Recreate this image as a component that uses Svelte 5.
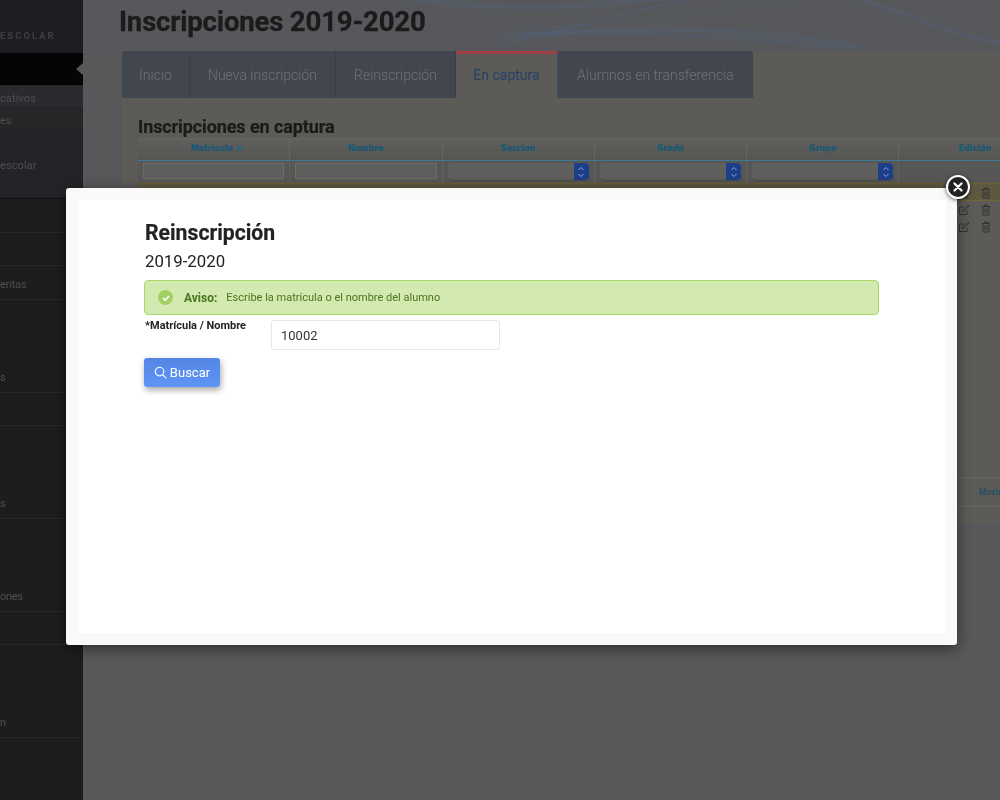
<script>
  const navRows = [
    { cls: 'active', h: 33, text: '' },
    { cls: 'sub', h: 22, text: 'cativos' },
    { cls: 'sub alt', h: 23, text: 'es' },
    { cls: 'group', h: 68, text: 'escolar' },
    { h: 34, text: '' },
    { h: 33, text: '' },
    { cls: 'mid', h: 34, text: 'entas' },
    { h: 93, text: 's', low: true },
    { h: 33, text: '' },
    { h: 93, text: 's', low: true },
    { cls: 'tight', h: 93, text: 'ones', low: true },
    { h: 33, text: '' },
    { h: 93, text: 'n', low: true }
  ];
  const cols = ['Matricula', 'Nombre', 'Seccion', 'Grado', 'Grupo', 'Edición'];
  const rows = [0, 1, 2];
</script>

<div class="page">
  <aside class="sidebar">
    <div class="brand"><span>ESCOLAR</span></div>
    {#each navRows as r}
      <div class="nav {r.cls ?? ''}" class:low={r.low} style="height:{r.h}px">
        {#if r.text}<span>{r.text}</span>{/if}
      </div>
    {/each}
  </aside>

  <main class="main">
    <header class="top">
      <svg class="waves" viewBox="0 0 917 51" preserveAspectRatio="none" aria-hidden="true">
        <g fill="none" stroke="#50627f">
          <path opacity=".55" stroke-width="1.5" d="M417 45C480 30 560 8 620 -4" />
          <path opacity=".3" stroke-width="5" d="M420 36C520 28 650 22 780 48" />
          <path opacity=".3" stroke-width="1.5" d="M440 28C540 26 660 6 730 -4" />
          <path opacity=".25" stroke-width="4" d="M440 34C560 30 680 38 760 48" />
          <path opacity=".5" stroke-width="2.5" d="M770 -2C830 14 880 40 917 42" />
          <path opacity=".3" stroke-width="6" d="M310 -4C400 10 480 12 590 -4" />
        </g>
      </svg>
      <h1>Inscripciones 2019-2020</h1>
    </header>

    <section class="panel">
      <nav class="tabs">
        <div class="tab" style="width:68px">Inicio</div>
        <div class="tab" style="width:146px">Nueva inscripción</div>
        <div class="tab" style="width:120px">Reinscripción</div>
        <div class="tab on" style="width:102px">En captura</div>
        <div class="tab" style="width:195px">Alumnos en transferencia</div>
      </nav>
      <div class="panel-body">
        <h2>Inscripciones en captura</h2>
        <div class="table">
          <div class="thead">
            {#each cols as c, i}
              <div class="th">{c}{#if i === 0}<svg class="sort" viewBox="0 0 10 8"><path d="M5 0l4 4H1z" fill="#1f6a88"/><rect x="1" y="5" width="8" height="2" fill="#4a5a60"/></svg>{/if}</div>
            {/each}
          </div>
          <div class="filters">
            <div class="fcell"><div class="finput"></div></div>
            <div class="fcell"><div class="finput"></div></div>
            {#each [0, 1, 2] as s}
              <div class="fcell"><div class="fselect"><i><svg viewBox="0 0 8 14"><path d="M1.5 5L4 2.5 6.5 5M1.5 9L4 11.5 6.5 9" fill="none" stroke="#8fa6cc" stroke-width="1"/></svg></i></div></div>
            {/each}
            <div class="fcell"></div>
          </div>
          <div class="tbody">
            {#each rows as r}
              <div class="row" class:hi={r === 0}>
                <div class="icons">
                  <svg viewBox="0 0 12 12"><path d="M9 6.5V10.5H1.5V3H6" fill="none" stroke="#333" stroke-width="1"/><path d="M4.5 8L5 6 10 1l1 1-5 5z" fill="none" stroke="#333" stroke-width=".9"/></svg>
                  <svg viewBox="0 0 12 12"><path d="M2 2.5h8M4.5 2.5V1h3v1.5M3 2.5v8.5h6V2.5M5 4.5V9M7 4.5V9" fill="none" stroke="#333" stroke-width="1"/></svg>
                </div>
              </div>
            {/each}
          </div>
          <div class="tfoot"><span>Mostr</span></div>
        </div>
      </div>
    </section>
  </main>

  <div class="modal" role="dialog">
    <button class="close" aria-label="Cerrar">
      <svg viewBox="0 0 10 10"><path d="M1.5 1.5l7 7M8.5 1.5l-7 7" stroke="#fff" stroke-width="2.2" stroke-linecap="round"/></svg>
    </button>
    <div class="modal-inner">
      <h3>Reinscripción</h3>
      <p class="year">2019-2020</p>
      <div class="alert">
        <span class="check"><svg viewBox="0 0 10 10"><path d="M2 5.2l2.2 2L8 3" fill="none" stroke="#fff" stroke-width="1.7"/></svg></span>
        <strong>Aviso:</strong>
        <span class="msg">Escribe la matrícula o el nombre del alumno</span>
      </div>
      <div class="field">
        <label for="q">*Matrícula / Nombre</label>
        <input id="q" value="10002" />
      </div>
      <button class="search">
        <svg viewBox="0 0 14 14"><circle cx="6" cy="6" r="4.6" fill="none" stroke="#fff" stroke-width="1.2"/><path d="M9.4 9.4L13 13" stroke="#fff" stroke-width="1.2" stroke-linecap="round"/></svg>
        Buscar
      </button>
    </div>
  </div>
</div>

<style>
  :global(body) { margin: 0; background: #58585a; font-family: Roboto, "Liberation Sans", sans-serif; }
  .page { position: relative; width: 1000px; height: 800px; display: flex; overflow: hidden; background: #58585a; filter: blur(.35px); }

  .sidebar { width: 83px; flex: none; background: #1d1d20; color: #4e4e50; font-size: 11px; }
  .brand { height: 53px; background: #1e1e22; box-sizing: border-box; padding-top: 30px; overflow: hidden; display: flex; }
  .brand span { font-size: 9.5px; font-weight: 700; letter-spacing: 2px; color: #3f3f42; }
  .nav { box-sizing: border-box; border-bottom: 1px solid #27272a; display: flex; align-items: center; white-space: nowrap; letter-spacing: .1px; position: relative; }
  .nav.low { align-items: flex-end; padding-bottom: 8px; }
  .nav.mid { padding-top: 3px; letter-spacing: -.2px; }
  .nav.tight { letter-spacing: -.3px; }
  .nav.active { background: #050505; border-bottom-color: #232326; }
  .nav.active::after { content: ""; position: absolute; right: 0; top: 10px; border: 6px solid transparent; border-right: 7px solid #58585a; border-left: 0; }
  .nav.sub { background: #2a2b2e; border-bottom-color: #242528; padding-top: 3px; }
  .nav.alt { background: #262629; padding-top: 2px; }
  .nav.group { background: #232427; padding-top: 2px; border-bottom-color: #111; }

  .main { flex: 1; min-width: 0; display: flex; flex-direction: column; }
  .top { height: 51px; flex: none; position: relative; padding-left: 36px; background: #57585b; }
  .waves { position: absolute; inset: 0; width: 100%; height: 100%; }
  h1 { position: relative; margin: 0; font-size: 27.6px; line-height: 44px; font-weight: 700; color: #1b1b1b; letter-spacing: -.2px; -webkit-text-stroke: .3px #1b1b1b; }

  .panel { margin-left: 39px; background: #5c5b58; height: 474px; display: flex; flex-direction: column; }
  .tabs { display: flex; height: 47px; flex: none; }
  .tab { box-sizing: border-box; display: flex; align-items: center; justify-content: center; font-size: 14px; font-weight: 300; color: #6f7277; background: #42474f; border-right: 1px solid #393e47; }
  .tab:first-child { border-top-left-radius: 3px; }
  .tab:last-child { border-top-right-radius: 3px; border-right: 0; }
  .tab.on { background: #5c5b58; color: #234266; border-top: 3px solid #a13f44; border-right: 1px solid #35507a; padding-bottom: 3px; font-weight: 400; }

  .panel-body { padding-left: 16px; }
  h2 { margin: 0; height: 40px; box-sizing: border-box; padding-top: 18px; font-size: 18px; line-height: 22px; font-weight: 700; color: #1a1a1a; letter-spacing: -.1px; white-space: nowrap; -webkit-text-stroke: .2px #1a1a1a; }
  .table { width: 914px; }
  .thead, .filters { display: grid; grid-template-columns: repeat(6, 152.3px); }
  .thead { height: 23px; background: linear-gradient(#605f5c, #555553); border-top: 1px solid #636361; border-bottom: 1px solid #3f7894; box-sizing: border-box; }
  .th { display: flex; align-items: center; justify-content: center; gap: 2px; padding-bottom: 2px; box-sizing: border-box; font-family: "DejaVu Sans", sans-serif; font-size: 8px; font-weight: 700; color: #185a76; -webkit-text-stroke: .2px #185a76; border-right: 1px solid #666664; }
  .th:first-child { padding-left: 8px; }
  .sort { width: 9px; height: 8px; }
  .filters { height: 22px; background: #575755; }
  .fcell { box-sizing: border-box; padding: 1px 5px; border-right: 1px solid #61605d; }
  .finput { height: 14px; margin-top: 1px; border: 1px solid #6c6c6a; background: #5e5e5c; }
  .fselect { height: 17px; margin-top: 1px; border-radius: 4px; background: #5f5f5d; box-shadow: 0 1px 1px #4a4a48; display: flex; justify-content: flex-end; }
  .fselect i { width: 15px; background: #1d3f8a; border-radius: 0 4px 4px 0; display: flex; align-items: center; justify-content: center; }
  .fselect svg { width: 8px; height: 14px; }
  .tbody { height: 294px; }
  .row { height: 16.6px; box-sizing: border-box; position: relative; }
  .row.hi { background: #5f5840; height: 18px; border-top: 1px solid #6f5f2c; border-bottom: 1px solid #6f6630; }
  .icons { position: absolute; left: 820px; top: 3px; display: flex; gap: 10px; }
  .icons svg { width: 12px; height: 12px; }
  .tfoot { height: 30px; box-sizing: border-box; border-top: 1px solid #666562; border-bottom: 1px solid #666562; display: flex; align-items: center; padding-left: 841px; font-size: 8.4px; font-weight: 500; color: #1f4f68; }

  .modal { position: absolute; left: 66px; top: 188px; width: 891px; height: 457px; box-sizing: border-box; padding: 12px 11px 12px 12px; background: #f9f9f9; border-radius: 3px; box-shadow: 0 3px 14px rgba(0, 0, 0, .5); }
  .close { position: absolute; right: -13px; top: -13px; width: 24px; height: 24px; padding: 0; border: 2px solid #fff; border-radius: 50%; background: #222; box-shadow: 0 1px 4px rgba(0, 0, 0, .6); display: flex; align-items: center; justify-content: center; }
  .close svg { width: 10px; height: 10px; }
  .modal-inner { height: 100%; box-sizing: border-box; background: #fff; padding: 19px 67px 0 66px; color: #222; }
  h3 { margin: 0 0 0 1px; font-size: 21.2px; line-height: 28px; font-weight: 700; color: #222; -webkit-text-stroke: .2px #222; }
  .year { margin: 2px 0 0 1px; font-size: 16.8px; line-height: 24px; color: #222; }
  .alert { margin-top: 7px; height: 35px; box-sizing: border-box; display: flex; align-items: center; padding-left: 13px; background: #d2e9b0; border: 1px solid #a9d86e; border-radius: 4px; font-size: 11px; color: #4a7520; }
  .check { width: 15px; height: 15px; border-radius: 50%; background: #a3d063; display: flex; align-items: center; justify-content: center; margin-right: 11px; }
  .check svg { width: 10px; height: 10px; }
  .alert strong { font-size: 12px; margin-right: 9px; }
  .field { display: flex; margin-top: 5px; }
  label { width: 127px; flex: none; font-size: 11px; font-weight: 700; color: #222; padding-left: 1px; line-height: 11px; box-sizing: border-box; }
  input { width: 229px; height: 30px; box-sizing: border-box; border: 1px solid #e6e6e6; border-radius: 3px; padding: 0 9px; font: 13px Roboto, sans-serif; color: #333; outline: none; background: #fff; }
  .search { margin-top: 8px; width: 76px; height: 29px; display: flex; align-items: center; justify-content: center; gap: 3px; padding: 0; border: 0; border-radius: 3px; background: linear-gradient(#5586e6, #5f95f5); color: #fff; font: 13px Roboto, sans-serif; box-shadow: 1px 3px 6px rgba(0, 0, 0, .35); }
  .search svg { width: 13px; height: 13px; }
</style>
